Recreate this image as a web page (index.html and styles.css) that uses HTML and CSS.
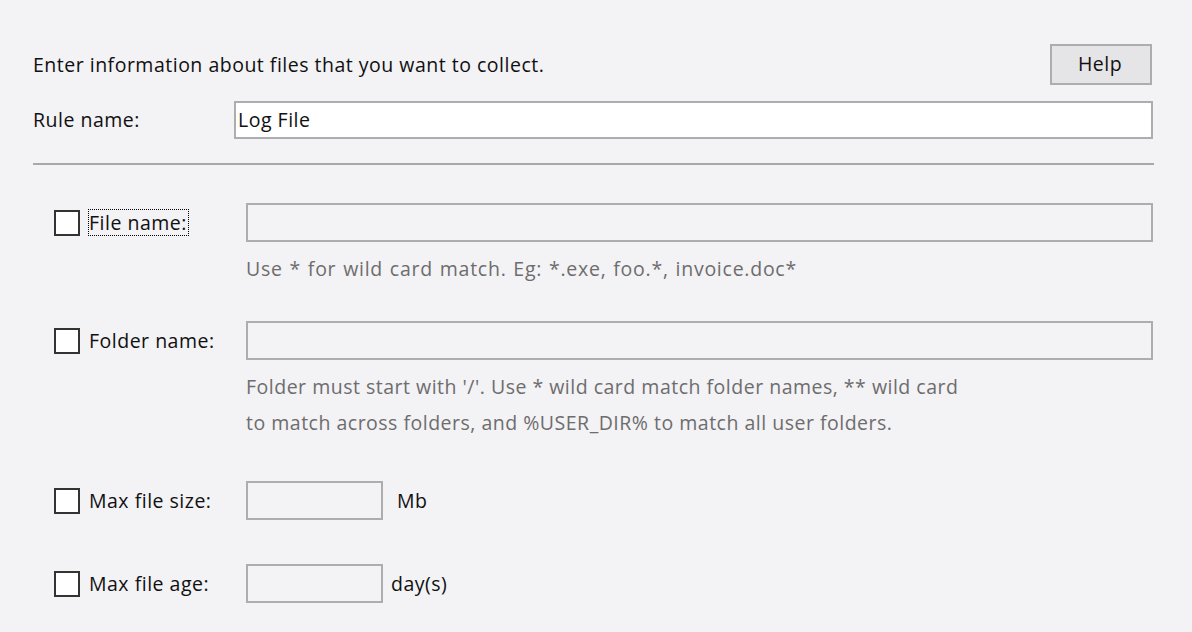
FILE: index.html
```html
<!DOCTYPE html>
<html>
<head>
<meta charset="utf-8">
<link rel="stylesheet" href="styles.css">
</head>
<body>
<div class="dialog">
  <div class="header-row">
    <span class="intro">Enter information about files that you want to collect.</span>
    <button class="help-btn">Help</button>
  </div>
  <div class="rule-row">
    <span class="rule-label">Rule name:</span>
    <div class="text-input rule-input">Log File</div>
  </div>
  <div class="separator"></div>

  <div class="field-row first">
    <div class="check-col">
      <span class="checkbox"></span>
      <span class="check-label focused">File name:</span>
    </div>
    <div class="text-input disabled wide"></div>
  </div>
  <div class="hint hint-file">Use * for wild card match. Eg: *.exe, foo.*, invoice.doc*</div>

  <div class="field-row folder">
    <div class="check-col">
      <span class="checkbox"></span>
      <span class="check-label">Folder name:</span>
    </div>
    <div class="text-input disabled wide"></div>
  </div>
  <div class="hint hint-folder">Folder must start with '/'. Use * wild card match folder names, ** wild card<br>to match across folders, and %USER_DIR% to match all user folders.</div>

  <div class="field-row size">
    <div class="check-col">
      <span class="checkbox"></span>
      <span class="check-label">Max file size:</span>
    </div>
    <div class="text-input disabled small"></div>
    <span class="unit unit-mb">Mb</span>
  </div>

  <div class="field-row age">
    <div class="check-col">
      <span class="checkbox"></span>
      <span class="check-label">Max file age:</span>
    </div>
    <div class="text-input disabled small"></div>
    <span class="unit unit-day">day(s)</span>
  </div>
</div>
</body>
</html>
```

FILE: styles.css
```css
html, body {
  margin: 0;
  padding: 0;
  background: #f3f2f5;
}
body {
  width: 1192px;
  height: 632px;
  overflow: hidden;
  font-family: "Open Sans", "Liberation Sans", Arial, sans-serif;
  font-size: 19.5px;
  line-height: 26px;
  letter-spacing: 0.5px;
  color: #101010;
}
.dialog {
  padding: 44px 39px 0 33px;
}
.header-row {
  display: flex;
  align-items: center;
  justify-content: space-between;
  height: 41px;
  margin-right: 1px;
}
.help-btn {
  width: 102px;
  height: 41px;
  box-sizing: border-box;
  border: 2px solid #adadb0;
  background: #e5e4e7;
  font-family: inherit;
  font-size: 19.5px;
  letter-spacing: 0.5px;
  color: #101010;
  padding: 0 2px 2px 0;
}
.rule-row {
  display: flex;
  align-items: center;
  margin-top: 16px;
}
.rule-label {
  width: 201px;
}
.text-input {
  box-sizing: border-box;
  border: 2px solid #adadb0;
  background: #fff;
  height: 38px;
  display: flex;
  align-items: center;
  padding-left: 2px;
}
.rule-input {
  flex: 1;
}
.separator {
  height: 2px;
  background: #a8a8aa;
  margin-top: 24px;
  margin-right: -1px;
}
.field-row {
  display: flex;
  align-items: center;
}
.field-row.first { margin-top: 38px; }
.field-row.folder { margin-top: 34px; }
.field-row.size { margin-top: 40px; }
.field-row.age { margin-top: 44px; }
.check-col {
  width: 213px;
  padding-left: 21px;
  box-sizing: border-box;
  display: flex;
  align-items: center;
}
.checkbox {
  width: 26px;
  height: 26px;
  box-sizing: border-box;
  border: 2px solid #333;
  background: #fff;
  margin-right: 8px;
}
.check-label {
  line-height: 25px;
  border: 1px dotted transparent;
  padding: 0 1px 0 0;
}
.check-label.focused {
  border-color: #000;
}
.text-input.disabled {
  background: #f3f2f5;
  height: 39px;
}
.wide { flex: 1; }
.small { width: 137px; }
.unit-mb { margin-left: 14px; }
.unit-day { margin-left: 8px; }
.hint {
  margin-left: 213px;
  margin-top: 9px;
  line-height: 36px;
  color: #6d6d6d;
}
.hint-file {
  letter-spacing: 0.75px;
  word-spacing: 1px;
}
.hint-folder {
  letter-spacing: 0.5px;
}
```
